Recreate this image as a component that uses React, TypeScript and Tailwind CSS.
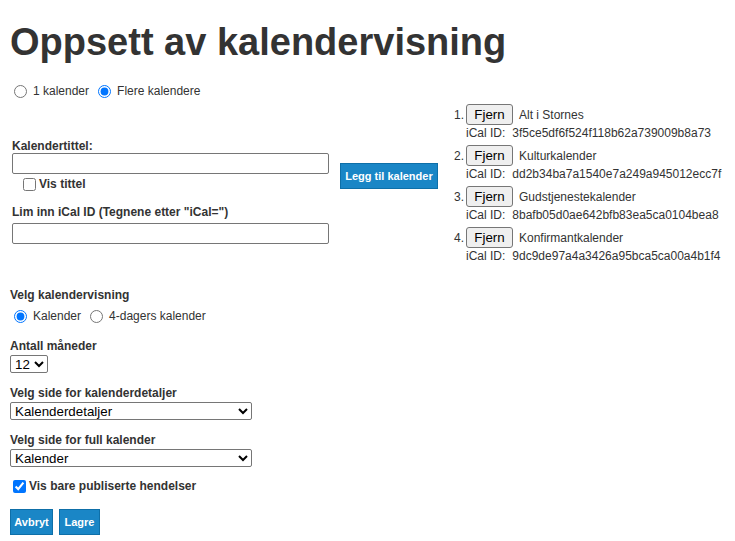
import React from "react";

const items = [
  { name: "Alt i Stornes", id: "3f5ce5df6f524f118b62a739009b8a73" },
  { name: "Kulturkalender", id: "dd2b34ba7a1540e7a249a945012ecc7f" },
  { name: "Gudstjenestekalender", id: "8bafb05d0ae642bfb83ea5ca0104bea8" },
  { name: "Konfirmantkalender", id: "9dc9de97a4a3426a95bca5ca00a4b1f4" },
];

export default function App() {
  return (
    <div
      className="w-[735px] h-[541px] bg-white text-[#333] px-[10px] overflow-hidden"
      style={{ fontFamily: '"Liberation Sans", Arial, sans-serif' }}
    >
      <h1 className="pt-[20px] h-[65px] text-[38px] leading-[44px] font-bold text-[#333] whitespace-nowrap">
        Oppsett av kalendervisning
      </h1>

      <div className="mt-[18px] flex items-center h-[16px] text-[12px] leading-[16px]">
        <input type="radio" name="mode" className="ml-[4px] mr-[6px] w-[13px] h-[13px]" />
        <span>1 kalender</span>
        <input type="radio" name="mode" defaultChecked className="ml-[9px] mr-[6px] w-[13px] h-[13px]" />
        <span>Flere kalendere</span>
      </div>

      <div className="mt-[5px] flex items-start">
        <div className="ml-[2px] w-[317px] pt-[35px]">
          <div className="text-[12px] leading-[14px] font-bold">Kalendertittel:</div>
          <input type="text" className="block w-[317px] h-[21px] border border-[#767676] rounded-[2px] bg-white" />
          <div className="mt-[2px] flex items-center h-[16px] text-[12px] leading-[16px] font-bold">
            <input type="checkbox" className="ml-[11px] mr-[3px] w-[13px] h-[13px]" />
            <span>Vis tittel</span>
          </div>
          <div className="mt-[13px] text-[12px] leading-[14px] font-bold">
            Lim inn iCal ID (Tegnene etter "iCal=")
          </div>
          <input type="text" className="mt-[4px] block w-[317px] h-[21px] border border-[#767676] rounded-[2px] bg-white" />
        </div>

        <button className="ml-[11px] mt-[59px] w-[98px] h-[26px] bg-[#1a86c6] border border-[#0e6fa8] text-white text-[11px] font-bold leading-[24px] text-center whitespace-nowrap">
          Legg til kalender
        </button>

        <ol className="ml-[15px] text-[12px] leading-[16px]">
          {items.map((it, i) => (
            <li key={it.id} className="mb-[4px]">
              <div className="flex items-center h-[21px]">
                <span className="w-[13px] pr-[2px] text-right">{i + 1}.</span>
                <button className="w-[47px] h-[21px] bg-[#efefef] border border-[#767676] rounded-[3px] text-[13.33px] text-black leading-[19px] text-center">
                  Fjern
                </button>
                <span className="ml-[6px]">{it.name}</span>
              </div>
              <div className="ml-[13px] h-[16px] whitespace-nowrap">
                iCal ID:<span className="ml-[7px]">{it.id}</span>
              </div>
            </li>
          ))}
        </ol>
      </div>

      <div className="mt-[20px] text-[12px] leading-[14px] font-bold">Velg kalendervisning</div>
      <div className="mt-[6px] flex items-center h-[16px] text-[12px] leading-[16px]">
        <input type="radio" name="view" defaultChecked className="ml-[4px] mr-[6px] w-[13px] h-[13px]" />
        <span>Kalender</span>
        <input type="radio" name="view" className="ml-[9px] mr-[6px] w-[13px] h-[13px]" />
        <span>4-dagers kalender</span>
      </div>

      <div className="mt-[15px] text-[12px] leading-[14px] font-bold">Antall måneder</div>
      <select
        defaultValue="12"
        className="mt-[2px] block w-[38px] h-[18px] border border-[#767676] rounded-[2px] bg-white text-[13.33px] text-black"
      >
        <option value="12">12</option>
        <option value="6">6</option>
      </select>

      <div className="mt-[13px] text-[12px] leading-[14px] font-bold">Velg side for kalenderdetaljer</div>
      <select className="mt-[2px] block w-[242px] h-[18px] border border-[#767676] rounded-[2px] bg-white text-[13.33px] text-black">
        <option>Kalenderdetaljer</option>
      </select>

      <div className="mt-[13px] text-[12px] leading-[14px] font-bold">Velg side for full kalender</div>
      <select className="mt-[2px] block w-[242px] h-[18px] border border-[#767676] rounded-[2px] bg-white text-[13.33px] text-black">
        <option>Kalender</option>
      </select>

      <div className="mt-[11px] flex items-center h-[16px] text-[12px] leading-[16px] font-bold">
        <input type="checkbox" defaultChecked className="ml-[3px] mr-[3px] w-[13px] h-[13px]" />
        <span>Vis bare publiserte hendelser</span>
      </div>

      <div className="mt-[15px] flex gap-[6px]">
        <button className="w-[43px] h-[26px] bg-[#1a86c6] border border-[#0e6fa8] text-white text-[11px] font-bold leading-[24px] text-center">
          Avbryt
        </button>
        <button className="w-[41px] h-[26px] bg-[#1a86c6] border border-[#0e6fa8] text-white text-[11px] font-bold leading-[24px] text-center">
          Lagre
        </button>
      </div>
    </div>
  );
}
